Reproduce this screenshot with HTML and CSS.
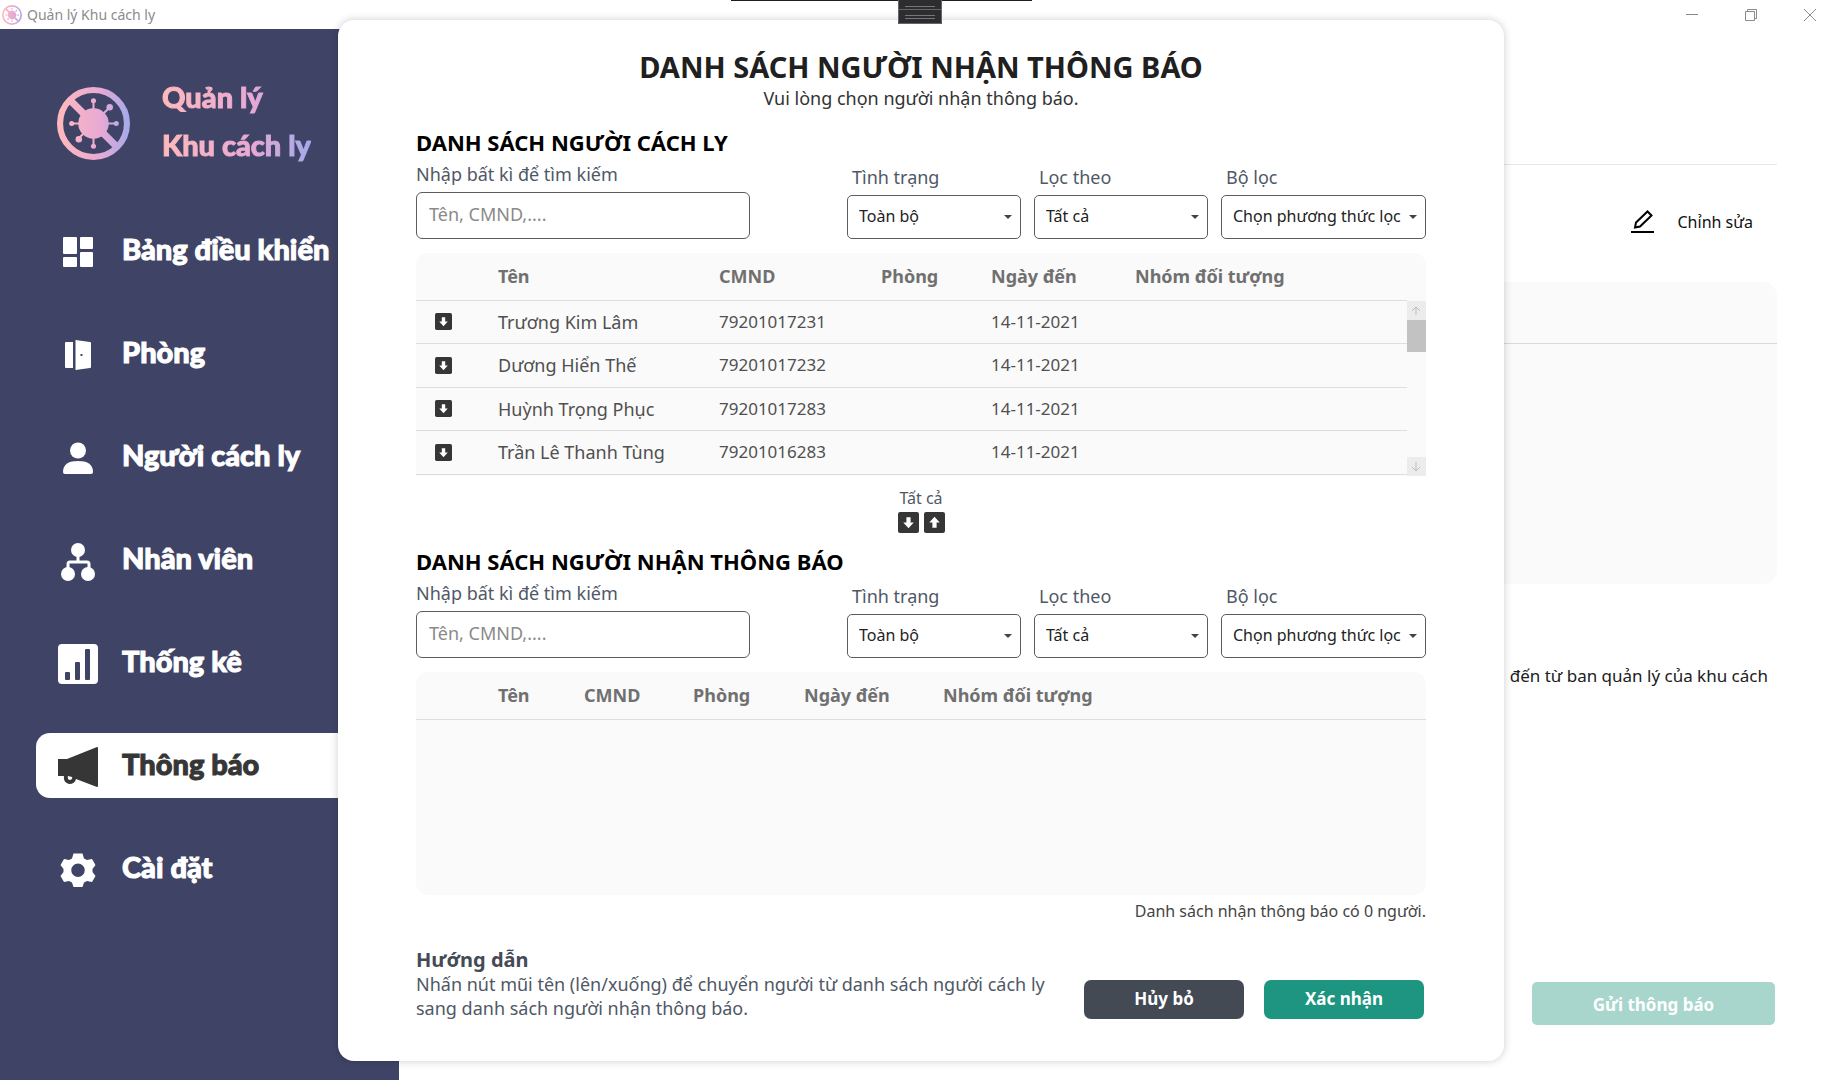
FILE: index.html
```html
<!DOCTYPE html>
<html lang="vi">
<head>
<meta charset="utf-8">
<meta name="viewport" content="width=device-width, initial-scale=1">
<title>Quản lý Khu cách ly</title>
<link rel="stylesheet" href="styles.css">
</head>
<body>
<svg class="defs" aria-hidden="true">
  <defs>
    <linearGradient id="brand-gradient" x1="0" x2="72" y1="0" y2="0" gradientUnits="userSpaceOnUse">
      <stop offset="0" stop-color="#ffb9bc"/><stop offset=".6" stop-color="#e8a9d4"/><stop offset="1" stop-color="#a3aaeb"/>
    </linearGradient>
    <symbol id="virus" viewBox="0 0 72 72">
      <g fill="none" stroke="url(#brand-gradient)">
        <circle cx="36" cy="36" r="33" stroke-width="6"/>
        <path d="M13 13L59 59" stroke-width="7"/>
        <path d="M36 13V59M13 36H59M21 51L52 20" stroke-width="2"/>
      </g>
      <g fill="url(#brand-gradient)">
        <circle cx="36" cy="36" r="15"/><circle cx="36" cy="13.500" r="2.500"/><circle cx="36" cy="58.500" r="2.500"/>
        <circle cx="14.500" cy="36" r="2.500"/><circle cx="58.500" cy="36" r="2.500"/><circle cx="52" cy="20" r="3.200"/><circle cx="21.500" cy="51.500" r="3.200"/>
      </g>
    </symbol>
    <symbol id="arrow-down" viewBox="0 0 20 20">
      <rect width="20" height="20" rx="2" fill="#363636"/><path d="M8 5h4v5h3l-5 5.500L5 10h3z" fill="#fff"/>
    </symbol>
    <symbol id="arrow-up" viewBox="0 0 20 20">
      <rect width="20" height="20" rx="2" fill="#363636"/><path d="M8 15h4v-5h3l-5-5.500L5 10h3z" fill="#fff"/>
    </symbol>
    <symbol id="caret" viewBox="0 0 8 4"><path d="M0 0h8L4 4z" fill="#444"/></symbol>
  </defs>
</svg>

<header class="titlebar">
  <svg class="titlebar-icon" aria-hidden="true"><use href="#virus"/></svg>
  <span class="titlebar-name">Quản lý Khu cách ly</span>
  <div class="window-controls">
    <button type="button" aria-label="Thu nhỏ"><svg viewBox="0 0 12 12"><path d="M0 5.500h12"/></svg></button>
    <button type="button" aria-label="Khôi phục"><svg viewBox="0 0 12 12"><path d="M.5 2.500h9v9h-9zM2.500 2.500v-2h9v9h-2"/></svg></button>
    <button type="button" aria-label="Đóng"><svg viewBox="0 0 12 12"><path d="M0 0l12 12M12 0L0 12"/></svg></button>
  </div>
</header>

<div class="shell">
  <aside class="sidebar">
    <div class="brand">
      <svg class="brand-logo" aria-hidden="true"><use href="#virus"/></svg>
      <p class="brand-name">Quản lý<br>Khu cách ly</p>
    </div>
    <nav class="nav">
      <a class="nav-item" href="#dashboard">
        <svg viewBox="0 0 40 40"><rect x="5" y="5" width="14" height="17" rx="1"/><rect x="5" y="25" width="14" height="10" rx="1"/><rect x="22" y="5" width="13" height="12" rx="1"/><rect x="22" y="20" width="13" height="15" rx="1"/></svg>
        <span>Bảng điều khiển</span></a>
      <a class="nav-item" href="#rooms">
        <svg viewBox="0 0 40 40"><path d="M8 7h7v26H8q-1 0-1-1V8q0-1 1-1zM17.500 5L32 7q1 0 1 1v24q0 1-1 1l-14.500 2zM22.500 19v2h2v-2z"/></svg>
        <span>Phòng</span></a>
      <a class="nav-item" href="#people">
        <svg viewBox="0 0 40 40"><circle cx="20" cy="12.500" r="8"/><path d="M5 34c0-8 6-11 15-11s15 3 15 11q0 2-2 2H7q-2 0-2-2z"/></svg>
        <span>Người cách ly</span></a>
      <a class="nav-item" href="#staff">
        <svg viewBox="0 0 40 40"><circle cx="20" cy="9" r="7"/><circle cx="10" cy="33" r="7"/><circle cx="30" cy="33" r="7"/><path d="M20 14v7M10 28v-5q0-2 2-2h17q2 0 2 2v5" fill="none" stroke="currentColor" stroke-width="3"/></svg>
        <span>Nhân viên</span></a>
      <a class="nav-item" href="#statistics">
        <svg viewBox="0 0 40 40"><path fill-rule="evenodd" d="M4 0h32q4 0 4 4v32q0 4-4 4H4q-4 0-4-4V4q0-4 4-4zM8 28q-1 0-1 1v6q0 1 1 1h3q1 0 1-1v-6q0-1-1-1zM18 18q-1 0-1 1v16q0 1 1 1h3q1 0 1-1V19q0-1-1-1zM28 5q-1 0-1 1v29q0 1 1 1h3q1 0 1-1V6q0-1-1-1z"/></svg>
        <span>Thống kê</span></a>
      <a class="nav-item is-active" href="#notifications" aria-current="page">
        <svg viewBox="0 0 40 40"><path d="M0 12h9L39 0q1 0 1 1v38q0 1-1 1L18 32q-1 5-7 5-6-2-5-8H0zM10 29q-1 4 2 4 3-1 2-3z" fill-rule="evenodd"/></svg>
        <span>Thông báo</span></a>
      <a class="nav-item" href="#settings">
        <svg viewBox="0 0 40 40"><path fill-rule="evenodd" d="M15.500 3.500h9l1.500 5 3 1.500 5-1 3.500 6-3 4v3l3 4-3.500 6-5-1-3 1.500-1.500 4.500h-9L14 32.500 11 31l-5 1-3.500-6 3-4v-3l-3-4L6 9l5 1 3-1.500zM20 13.500a6.500 6.500 0 1 0 0 13.500 6.500 6.500 0 0 0 0-13.500z"/></svg>
        <span>Cài đặt</span></a>
    </nav>
  </aside>

  <main class="page">
    <div class="page-head"></div>
    <div class="page-tools">
      <button class="edit-button" type="button">
        <svg viewBox="0 0 24 24" aria-hidden="true"><path d="M4 17.500l1-5L16.500 1.500l4 4L9 16.500z" fill="none" stroke="#000" stroke-width="2"/><path d="M0 22h23" stroke="#000" stroke-width="2"/></svg>
        <span>Chỉnh sửa</span>
      </button>
    </div>
    <div class="page-card"><div class="page-card-head"></div></div>
    <p class="page-note">đến từ ban quản lý của khu cách</p>
    <button class="send-button" type="button" disabled>Gửi thông báo</button>
  </main>
</div>

<div class="overlay">
  <section class="dialog" role="dialog" aria-labelledby="dialog-title">
    <h1 class="dialog-title" id="dialog-title">DANH SÁCH NGƯỜI NHẬN THÔNG BÁO</h1>
    <p class="dialog-subtitle">Vui lòng chọn người nhận thông báo.</p>

    <h2 class="list-title">DANH SÁCH NGƯỜI CÁCH LY</h2>
    <div class="filters">
      <div class="field field-search">
        <label for="search-a">Nhập bất kì để tìm kiếm</label>
        <input id="search-a" type="text" placeholder="Tên, CMND,....">
      </div>
      <div class="field">
        <label for="status-a">Tình trạng</label>
        <div class="select"><select id="status-a"><option>Toàn bộ</option></select><svg><use href="#caret"/></svg></div>
      </div>
      <div class="field">
        <label for="by-a">Lọc theo</label>
        <div class="select"><select id="by-a"><option>Tất cả</option></select><svg><use href="#caret"/></svg></div>
      </div>
      <div class="field field-wide">
        <label for="filter-a">Bộ lọc</label>
        <div class="select"><select id="filter-a"><option>Chọn phương thức lọc</option></select><svg><use href="#caret"/></svg></div>
      </div>
    </div>
    <div class="grid-box">
      <table class="grid">
        <colgroup><col class="c-pick"><col class="c-name"><col class="c-id"><col class="c-room"><col class="c-date"><col></colgroup>
        <thead><tr><th></th><th>Tên</th><th>CMND</th><th>Phòng</th><th>Ngày đến</th><th>Nhóm đối tượng</th></tr></thead>
        <tbody>
          <tr><td><button class="move-button" type="button" aria-label="Chuyển xuống"><svg><use href="#arrow-down"/></svg></button></td><td>Trương Kim Lâm</td><td class="num">79201017231</td><td></td><td class="num">14-11-2021</td><td></td></tr>
          <tr><td><button class="move-button" type="button" aria-label="Chuyển xuống"><svg><use href="#arrow-down"/></svg></button></td><td>Dương Hiển Thế</td><td class="num">79201017232</td><td></td><td class="num">14-11-2021</td><td></td></tr>
          <tr><td><button class="move-button" type="button" aria-label="Chuyển xuống"><svg><use href="#arrow-down"/></svg></button></td><td>Huỳnh Trọng Phục</td><td class="num">79201017283</td><td></td><td class="num">14-11-2021</td><td></td></tr>
          <tr><td><button class="move-button" type="button" aria-label="Chuyển xuống"><svg><use href="#arrow-down"/></svg></button></td><td>Trần Lê Thanh Tùng</td><td class="num">79201016283</td><td></td><td class="num">14-11-2021</td><td></td></tr>
        </tbody>
      </table>
      <div class="scrollbar">
        <button type="button" aria-label="Cuộn lên"><svg viewBox="0 0 19 19"><path d="M9 14V6M5 10l4-4 4 4"/></svg></button>
        <div class="scrollbar-thumb"></div>
        <button class="scrollbar-end" type="button" aria-label="Cuộn xuống"><svg viewBox="0 0 19 19"><path d="M9 5v9M5 10l4 4 4-4"/></svg></button>
      </div>
    </div>

    <div class="move-all">
      <span>Tất cả</span>
      <div class="move-all-buttons">
        <button class="move-button is-large" type="button" aria-label="Chuyển tất cả xuống"><svg><use href="#arrow-down"/></svg></button>
        <button class="move-button is-large" type="button" aria-label="Chuyển tất cả lên"><svg><use href="#arrow-up"/></svg></button>
      </div>
    </div>

    <h2 class="list-title">DANH SÁCH NGƯỜI NHẬN THÔNG BÁO</h2>
    <div class="filters">
      <div class="field field-search">
        <label for="search-b">Nhập bất kì để tìm kiếm</label>
        <input id="search-b" type="text" placeholder="Tên, CMND,....">
      </div>
      <div class="field">
        <label for="status-b">Tình trạng</label>
        <div class="select"><select id="status-b"><option>Toàn bộ</option></select><svg><use href="#caret"/></svg></div>
      </div>
      <div class="field">
        <label for="by-b">Lọc theo</label>
        <div class="select"><select id="by-b"><option>Tất cả</option></select><svg><use href="#caret"/></svg></div>
      </div>
      <div class="field field-wide">
        <label for="filter-b">Bộ lọc</label>
        <div class="select"><select id="filter-b"><option>Chọn phương thức lọc</option></select><svg><use href="#caret"/></svg></div>
      </div>
    </div>
    <div class="grid-box is-empty">
      <table class="grid">
        <colgroup><col class="c-pick"><col class="e-name"><col class="e-id"><col class="e-room"><col class="e-date"><col></colgroup>
        <thead><tr><th></th><th>Tên</th><th>CMND</th><th>Phòng</th><th>Ngày đến</th><th>Nhóm đối tượng</th></tr></thead>
      </table>
    </div>
    <p class="count">Danh sách nhận thông báo có 0 người.</p>

    <footer class="dialog-foot">
      <div class="help">
        <h3>Hướng dẫn</h3>
        <p>Nhấn nút mũi tên (lên/xuống) để chuyển người từ danh sách người cách ly sang danh sách người nhận thông báo.</p>
      </div>
      <div class="actions">
        <button class="action is-cancel" type="button">Hủy bỏ</button>
        <button class="action is-confirm" type="button">Xác nhận</button>
      </div>
    </footer>
  </section>
</div>

<div class="debug-bar" aria-hidden="true"></div>
<div class="debug-grip" aria-hidden="true"><svg viewBox="0 0 44 24"><path d="M.5 0v23.500h43V0M0 9.500h44" fill="none" stroke="#66666a"/><path d="M7 6.500h30M7 15.500h30M7 18.500h30" stroke="#77777b"/></svg></div>
</body>
</html>
```
FILE: styles.css
```css
* { box-sizing: border-box; }

body {
  margin: 0;
  min-height: 100vh;
  display: flex;
  flex-direction: column;
  background: #fff;
  color: #202020;
  font: 18px/24px "Noto Sans", "Open Sans", sans-serif;
}

h1, h2, h3, p { margin: 0; }
button, input, select { font: inherit; color: inherit; }
button { border: 0; padding: 0; background: none; cursor: pointer; }
.defs { position: absolute; width: 0; height: 0; }

/* Window title bar */
.titlebar { display: flex; align-items: center; height: 29px; padding-left: 2px; }
.titlebar-icon { width: 20px; height: 20px; margin-right: 5px; }
.titlebar-name { font-size: 14px; line-height: 20px; color: #8c8c8c; }
.window-controls { display: flex; margin-left: auto; padding-right: 3px; }
.window-controls button { width: 59px; height: 27px; display: grid; place-items: center; }
.window-controls svg { width: 12px; height: 12px; fill: none; stroke: #8a8a8a; }

.shell { flex: 1; display: grid; grid-template-columns: 399px 1fr; }

/* Sidebar */
.sidebar { background: #3f4466; padding: 44px 0 0; }
.brand { display: flex; align-items: center; gap: 32px; padding-left: 57px; }
.brand-logo { width: 73px; height: 73px; }
.brand-name {
  padding-bottom: 4px;
  font: 900 29px/48px "Lato Black", Lato, "Noto Sans", sans-serif;
  color: transparent;
  background: linear-gradient(90deg, #ffb9bc, #e8a9d4 60%, #a3aaeb);
  background-clip: text;
  -webkit-background-clip: text;
  -webkit-text-stroke: 1px transparent;
}
.nav { display: flex; flex-direction: column; gap: 38px; margin-top: 45px; padding-left: 36px; }
.nav-item {
  display: flex;
  align-items: center;
  gap: 24px;
  height: 65px;
  padding: 0 0 4px 22px;
  border-radius: 14px 0 0 14px;
  color: #fff;
  text-decoration: none;
  font: 900 29px/40px "Lato Black", Lato, "Noto Sans", sans-serif;
}
.nav-item span { -webkit-text-stroke: 1px currentColor; }
.nav-item svg { width: 40px; height: 40px; fill: currentColor; margin-top: 7px; }
.nav-item.is-active { background: #fff; color: #363636; }

/* Page behind the dialog */
.page { display: flex; flex-direction: column; padding: 0 65px 55px 40px; }
.page-head { height: 136px; border-bottom: 1px solid #e6e6e6; }
.page-tools { display: flex; justify-content: flex-end; align-items: center; height: 117px; padding: 0 24px 4px 0; }
.edit-button { display: flex; align-items: center; gap: 23px; font-size: 16px; color: #111; }
.edit-button svg { width: 24px; height: 24px; }
.page-card { height: 302px; border-radius: 14px; background: #fafafa; }
.page-card-head { height: 62px; border-bottom: 1px solid #d8d8d8; }
.page-note { margin-top: 80px; padding-right: 9px; font-size: 17px; text-align: right; }
.send-button {
  align-self: flex-end;
  width: 243px;
  height: 43px;
  margin: auto 2px 0 0;
  padding-top: 2px;
  border-radius: 5px;
  background: #a8d6cd;
  color: #fff;
  font-size: 17px;
  font-weight: 700;
}

/* Dialog */
.overlay { position: absolute; inset: 0; display: flex; align-items: center; justify-content: center; }
.dialog {
  width: 100%;
  max-width: 1166px;
  padding: 28px 78px 41px;
  border-radius: 16px;
  background: #fff;
  box-shadow: 0 0 8px rgba(0, 0, 0, .2);
}
.dialog-title { font-size: 29px; line-height: 38px; text-align: center; }
.dialog-subtitle { margin-bottom: 17px; font-size: 18px; text-align: center; color: #333; }
.list-title { margin-bottom: 5px; font-size: 22px; line-height: 30px; color: #000; }

.filters { display: flex; align-items: flex-end; gap: 13px; }
.field { display: flex; flex-direction: column; gap: 6px; width: 174px; color: #4f5866; }
.field label { padding-left: 5px; }
.field-search { width: 334px; margin-right: auto; }
.field-search label { padding-left: 0; }
.field-wide { width: 205px; }
.field input {
  width: 100%;
  height: 47px;
  padding: 0 12px 2px;
  border: 1px solid #5c5c5c;
  border-radius: 6px;
  background: #fff;
}
.field input::placeholder { color: #8a8a8a; opacity: 1; }
.select { display: grid; align-items: center; }
.select select {
  grid-area: 1 / 1;
  width: 100%;
  height: 44px;
  padding: 0 24px 2px 11px;
  border: 1px solid #5c5c5c;
  border-radius: 5px;
  background: #fff;
  appearance: none;
  color: #222;
  font-size: 16px;
}
.select svg { grid-area: 1 / 1; justify-self: end; width: 8px; height: 4px; margin-right: 9px; pointer-events: none; }

/* People tables */
.grid-box { display: flex; align-items: flex-start; height: 223px; margin-top: 14px; border-radius: 12px 12px 0 0; background: #fafafa; }
.grid-box.is-empty { border-radius: 12px; }
.grid { flex: 1; height: 222px; table-layout: fixed; border-collapse: separate; border-spacing: 0; }
.is-empty .grid { height: auto; }
.grid th { height: 48px; padding: 0; border-bottom: 1px solid #dedede; text-align: left; color: #707070; font-weight: 700; }
.grid td { height: 43px; padding: 0; border-bottom: 1px solid #dedede; color: #505050; }
.grid .num { font-size: 17px; }
.grid td:first-child { padding-left: 19px; }
.c-pick { width: 82px; }
.c-name { width: 221px; }
.c-id { width: 162px; }
.c-room { width: 110px; }
.c-date { width: 144px; }
.e-name { width: 86px; }
.e-id { width: 109px; }
.e-room { width: 111px; }
.e-date { width: 139px; }
.move-button { display: block; width: 17px; height: 17px; }
.move-button svg { display: block; width: 100%; height: 100%; }
.move-button.is-large { width: 21px; height: 21px; }

.scrollbar { display: flex; flex-direction: column; width: 19px; height: 175px; margin-top: 48px; }
.scrollbar button { height: 19px; background: #ececec; }
.scrollbar svg { display: block; width: 19px; height: 19px; fill: none; stroke: #bdbdbd; }
.scrollbar-thumb { height: 32px; background: #c2c2c2; }
.scrollbar-end { margin-top: auto; }

.move-all { display: flex; flex-direction: column; align-items: center; gap: 4px; margin: 12px 0 13px; font-size: 16px; line-height: 20px; color: #4f5866; }
.move-all-buttons { display: flex; gap: 5px; }

.count { margin-top: 4px; font-size: 16px; text-align: right; color: #444; }
.dialog-foot { display: flex; justify-content: space-between; align-items: flex-end; margin-top: 24px; }
.help { max-width: 640px; color: #4f5866; }
.help h3 { font-size: 20px; line-height: 25px; color: #454b56; }
.actions { display: flex; gap: 20px; padding: 0 2px 1px 0; }
.action { width: 160px; height: 39px; border-radius: 7px; color: #fff; font-size: 17px; font-weight: 700; }
.is-cancel { background: #444a54; }
.is-confirm { background: #1e9580; }

/* Runtime tools handle pinned to the top edge */
.debug-bar { position: absolute; top: 0; left: 731px; width: 301px; height: 1px; background: #1e1e1e; }
.debug-grip { position: absolute; top: 0; left: 898px; width: 44px; height: 24px; background: #2d2d30; }
.debug-grip svg { display: block; width: 44px; height: 24px; }
```
